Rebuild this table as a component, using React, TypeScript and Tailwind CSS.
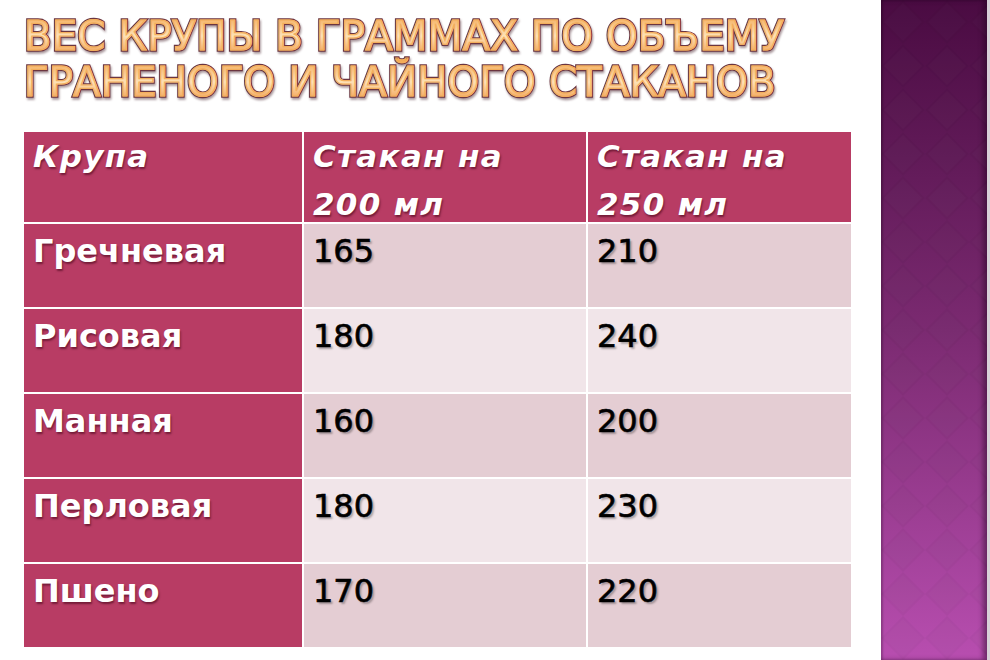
import React from "react";

const rows = [
  { name: "Гречневая", a: "165", b: "210" },
  { name: "Рисовая", a: "180", b: "240" },
  { name: "Манная", a: "160", b: "200" },
  { name: "Перловая", a: "180", b: "230" },
  { name: "Пшено", a: "170", b: "220" },
];

// Orange outlined slide title: dark outline layer under a gradient-filled layer
function TitleLine({ children }: { children: string }) {
  return (
    <div className="relative w-fit">
      <div className="text-[#6b3540] [-webkit-text-stroke:3.5px_#6b3540] drop-shadow-[1px_2px_1px_rgba(60,20,30,0.45)]">
        {children}
      </div>
      <div
        aria-hidden="true"
        className="absolute inset-0 bg-gradient-to-b from-[#f2a64c] via-[#fde2b6] to-[#ec8f2e] bg-clip-text text-transparent [-webkit-text-stroke:1.2px_#f3ae5c]"
      >
        {children}
      </div>
    </div>
  );
}

const headCell =
  "h-[90px] bg-[#b83c64] pl-[9px] text-[31px] font-bold italic leading-[48px] tracking-[1.3px] text-white [text-shadow:1px_2px_2px_rgba(60,0,20,0.55)]";
const nameCell =
  "h-[83px] bg-[#b83c64] pl-[9px] pt-[3px] text-[32px] font-bold leading-[48px] text-white [text-shadow:1px_2px_2px_rgba(60,0,20,0.55)]";
const numCell =
  "h-[83px] pl-[9px] pt-[3px] text-[32px] leading-[48px] text-black [-webkit-text-stroke:0.6px_#000] [text-shadow:2px_2px_2px_rgba(0,0,0,0.3)]";

export default function App() {
  return (
    <div className="flex h-[660px] w-[990px] overflow-hidden bg-white font-['DejaVu_Sans',sans-serif]">
      {/* Slide content */}
      <div className="flex-1 pl-6">
        <h1 className="pt-[13px] text-[40px] font-normal leading-[46px] tracking-[0.3px]">
          <TitleLine>ВЕС КРУПЫ В ГРАММАХ ПО ОБЪЕМУ</TitleLine>
          <TitleLine>ГРАНЕНОГО И ЧАЙНОГО СТАКАНОВ</TitleLine>
        </h1>

        {/* Table */}
        <div className="mt-[27px] grid w-[827px] grid-cols-[278px_282px_263px] gap-[2px] bg-white">
          <div className={headCell}>Крупа</div>
          <div className={headCell}>
            Стакан на
            <br />
            200 мл
          </div>
          <div className={headCell}>
            Стакан на
            <br />
            250 мл
          </div>

          {rows.map((r, i) => (
            <React.Fragment key={r.name}>
              <div className={nameCell}>{r.name}</div>
              <div className={`${numCell} ${i % 2 === 0 ? "bg-[#e4cdd3]" : "bg-[#f1e5e9]"}`}>{r.a}</div>
              <div className={`${numCell} ${i % 2 === 0 ? "bg-[#e4cdd3]" : "bg-[#f1e5e9]"}`}>{r.b}</div>
            </React.Fragment>
          ))}
        </div>
      </div>

      {/* Decorative side band */}
      <div className="relative w-[109px] border-r-[3px] border-[#d8d0d8] bg-gradient-to-b from-[#4a0b42] via-[#7b2a71] to-[#b84eb0] shadow-[inset_-4px_0_5px_rgba(30,0,30,0.45),inset_2px_0_2px_rgba(0,0,0,0.2)]">
        <svg className="absolute inset-0 h-full w-full" aria-hidden="true">
          <defs>
            <pattern id="diamonds" width="44" height="44" patternUnits="userSpaceOnUse">
              <polygon points="22,0 44,22 22,44 0,22" fill="rgba(0,0,0,0.03)" />
              <polygon points="22,3 41,22 22,41 3,22" fill="rgba(255,255,255,0.015)" />
            </pattern>
          </defs>
          <rect width="100%" height="100%" fill="url(#diamonds)" />
        </svg>
      </div>
    </div>
  );
}
